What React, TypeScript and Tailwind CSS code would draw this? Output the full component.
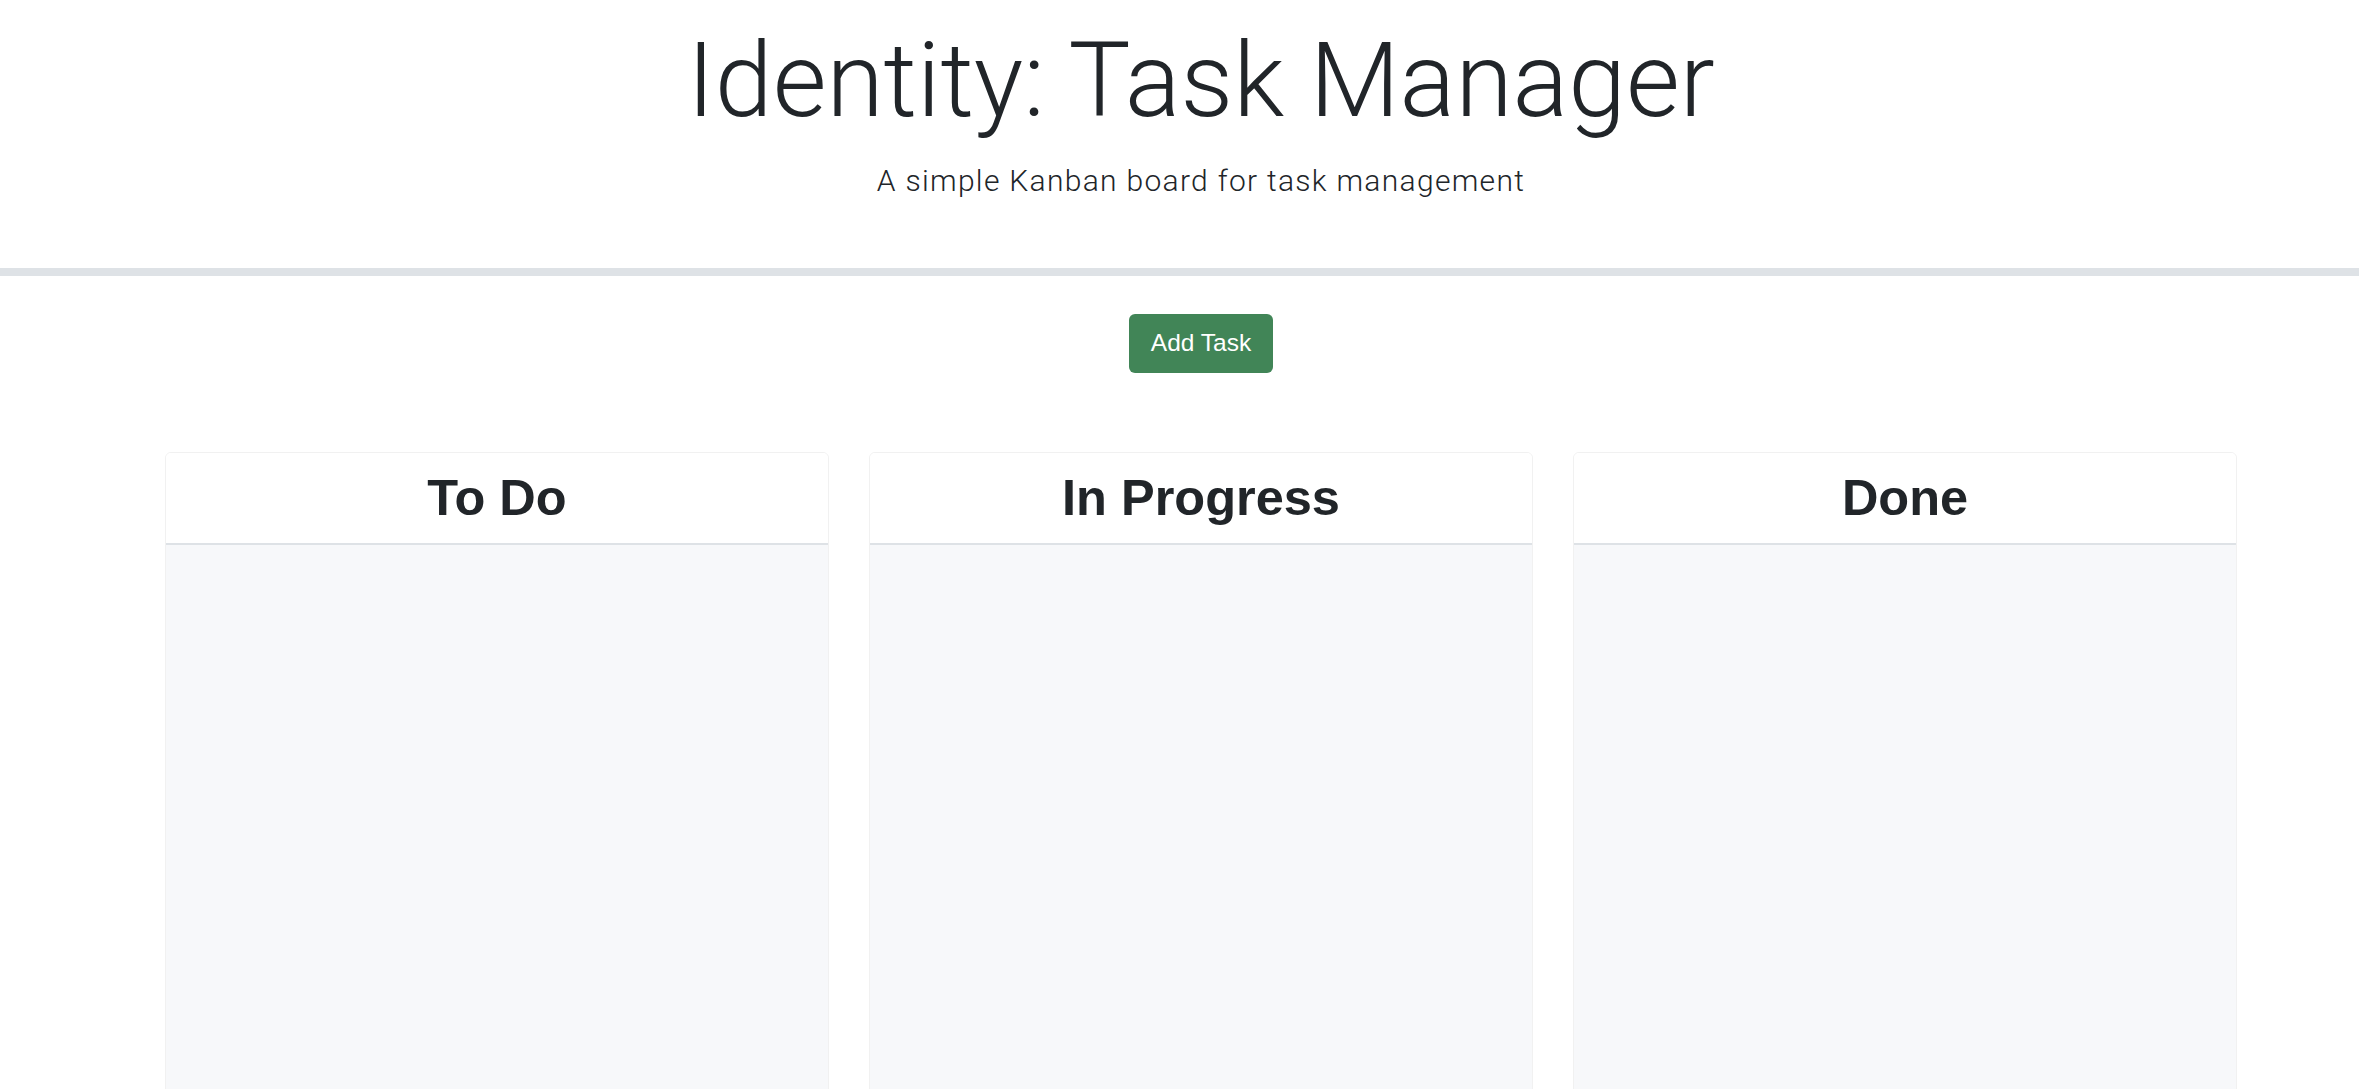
import React from "react"

const columns = ["To Do", "In Progress", "Done"]

function Column({ title }: { title: string }) {
  return (
    <div className="flex flex-col rounded-[6px] border border-[#f1f1f1] overflow-hidden">
      <div className="h-[92px] bg-white border-b-2 border-[#dee2e6] flex items-center justify-center">
        <h2 className="text-[50.5px] font-bold leading-none text-[#212529] font-['Liberation_Sans',Arial,sans-serif]">
          {title}
        </h2>
      </div>
      <div className="h-[700px] bg-[#f7f8fa]"></div>
    </div>
  )
}

export default function App() {
  return (
    <div className="min-h-screen bg-white overflow-hidden text-[#212529]">
      <header className="pl-[43px] pt-[20px] pb-[69px] text-center">
        <h1 className="text-[104px] leading-[122px] font-light font-['Roboto','Liberation_Sans',sans-serif]">
          Identity: Task Manager
        </h1>
        <p className="mt-[21px] text-[30px] leading-[36px] tracking-[1.3px] font-light font-['Roboto','Liberation_Sans',sans-serif]">
          A simple Kanban board for task management
        </p>
      </header>
      <div className="h-[8px] bg-[#dee2e6]"></div>
      <main className="pl-[43px]">
        <div className="flex justify-center pt-[38px]">
          <button className="h-[59px] px-[22px] rounded-[6px] bg-[#418557] text-white text-[24.5px] font-['Liberation_Sans',Arial,sans-serif]">
            Add Task
          </button>
        </div>
        <div className="mx-auto mt-[79px] w-[2072px] grid grid-cols-3 gap-[40px]">
          {columns.map((c) => (
            <Column key={c} title={c} />
          ))}
        </div>
      </main>
    </div>
  )
}
